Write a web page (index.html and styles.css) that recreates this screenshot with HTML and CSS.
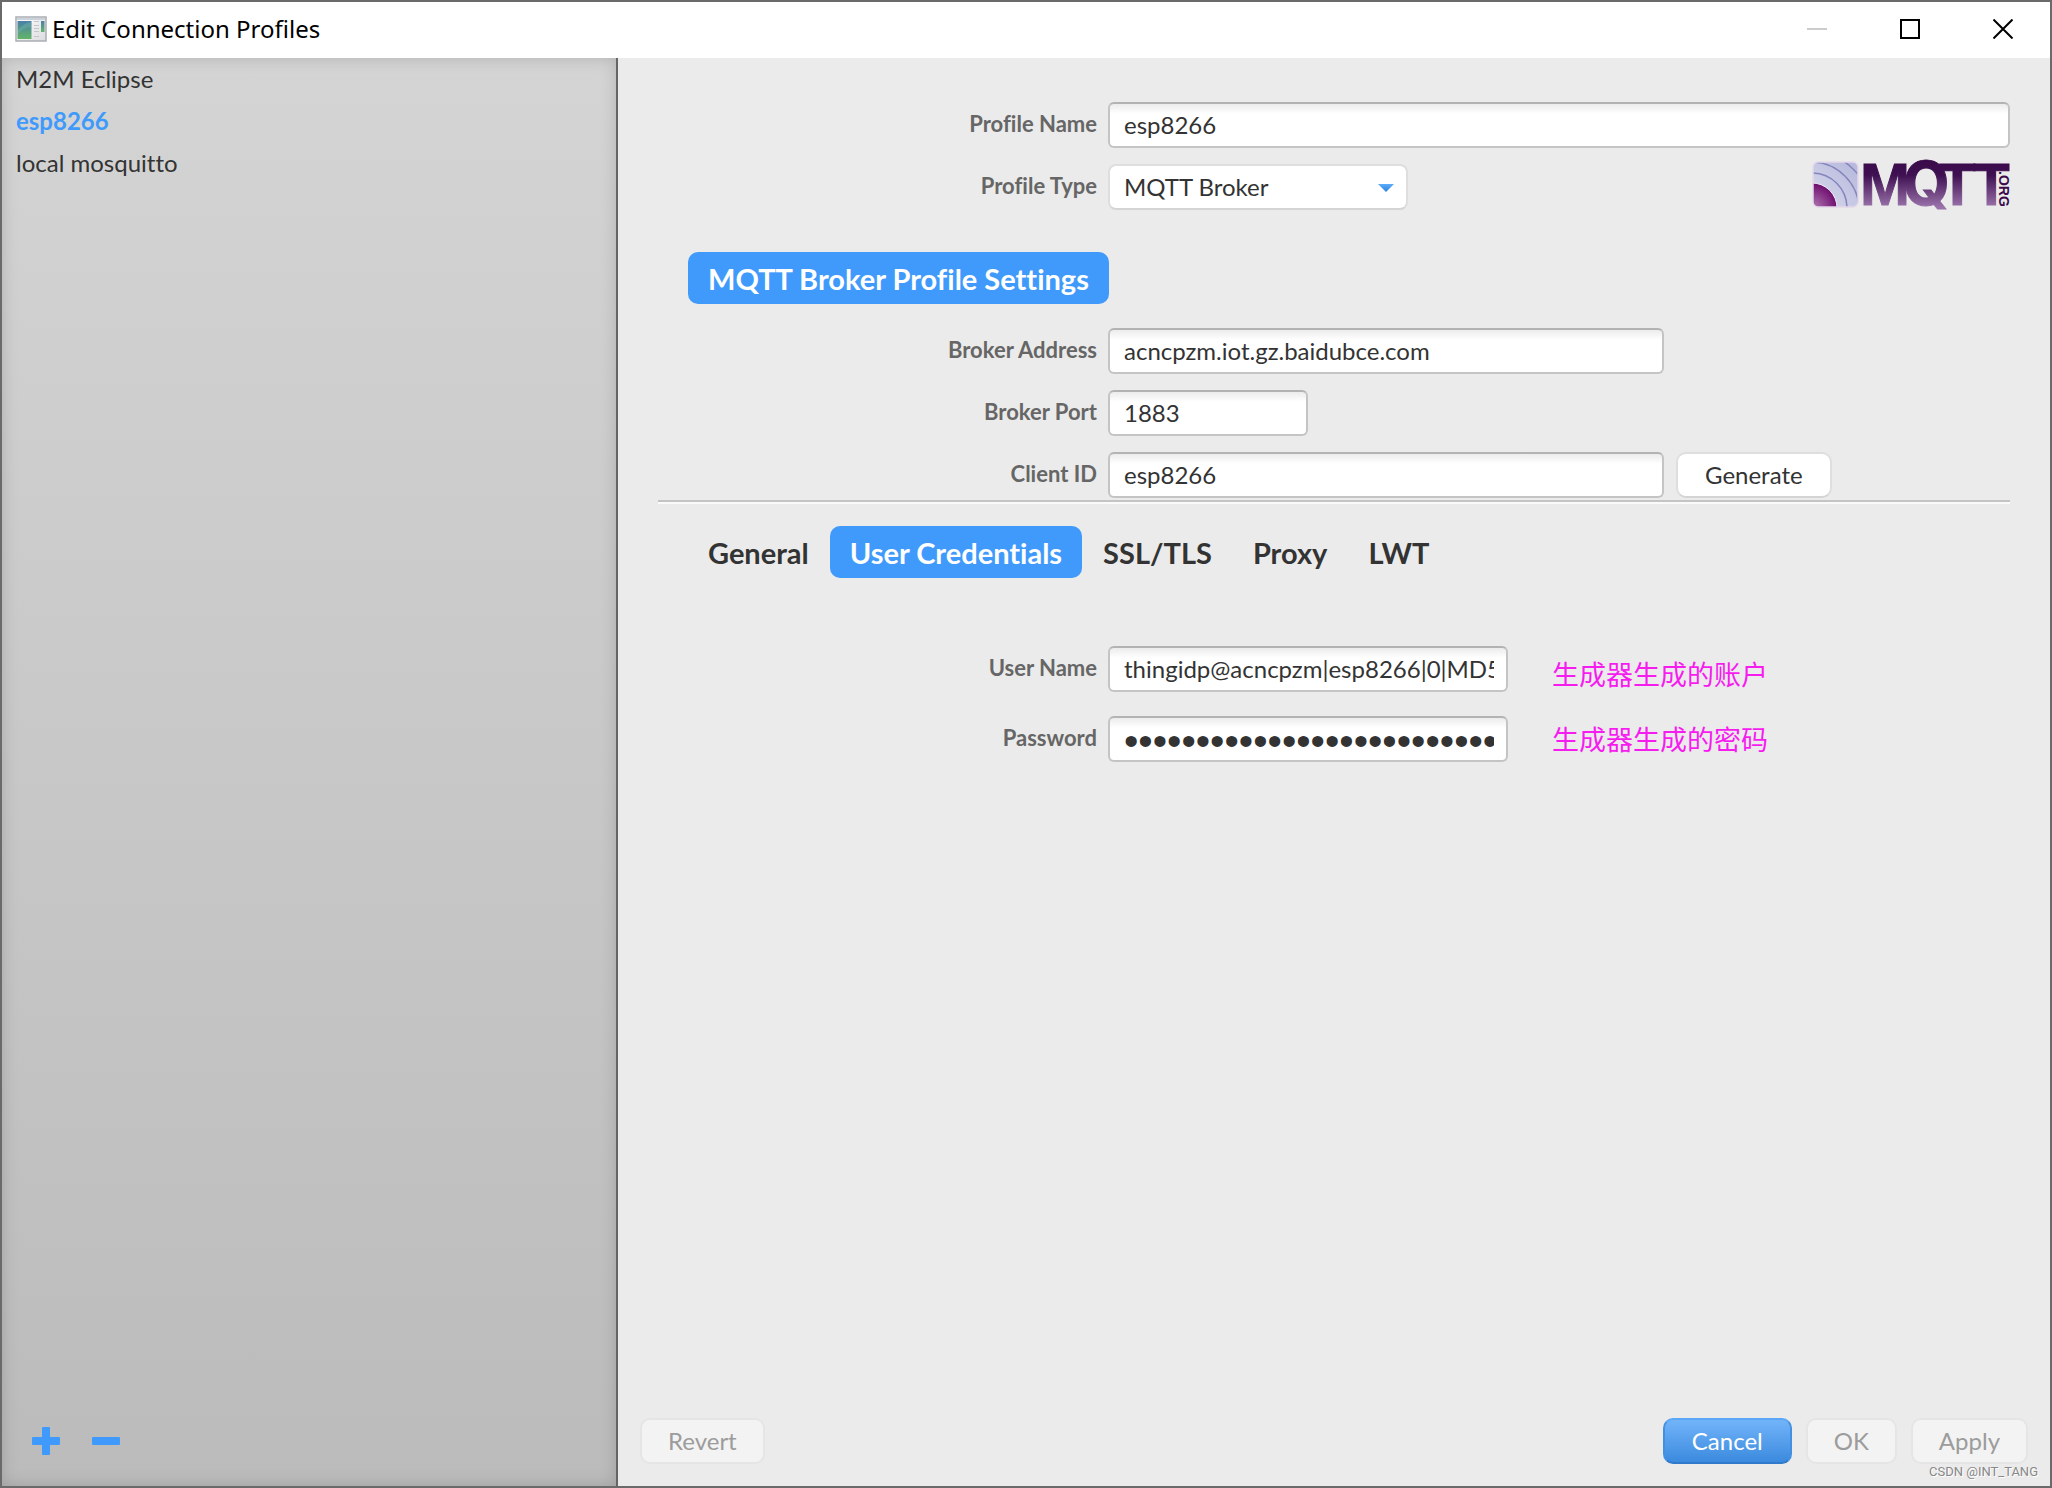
FILE: index.html
```html
<!DOCTYPE html>
<html lang="en">
<head>
<meta charset="utf-8">
<title>Edit Connection Profiles</title>
<link rel="stylesheet" href="styles.css">
</head>
<body>
<div class="window">
  <header class="titlebar">
    <svg class="app-icon" width="32" height="26" viewBox="0 0 32 26" aria-hidden="true">
      <defs>
        <linearGradient id="pane" x1="0" y1="0" x2="0" y2="1"><stop offset="0" stop-color="#4a7fa8"/><stop offset="1" stop-color="#62b568"/></linearGradient>
        <linearGradient id="sheet" x1="0" y1="0" x2="1" y2="1"><stop offset="0" stop-color="#fff"/><stop offset="1" stop-color="#dcdcdf"/></linearGradient>
      </defs>
      <rect x="1" y="1" width="30" height="24" fill="url(#sheet)" stroke="#a9adb3" stroke-width="1.5"/>
      <path d="M2 3h28" stroke="#ccd2da" stroke-width="2"/>
      <rect x="2.500" y="5" width="14" height="18" fill="url(#pane)"/>
      <path d="M3 14q7-8 13-8v5q-7 0-13 7z" fill="#6fb3a8" opacity=".45"/>
      <path d="M19 5.500h5M19 9.500h5M19 12.500h5M19 15.500h5M19 20.500h5" stroke="#c3c6ca"/>
      <rect x="26" y="5" width="3.500" height="11" fill="url(#pane)"/>
    </svg>
    <h1 class="title">Edit Connection Profiles</h1>
    <div class="window-controls">
      <button class="window-button" aria-label="Minimize" disabled><svg width="20" height="20"><path d="M0 10h20" stroke="#ccc" stroke-width="2"/></svg></button>
      <button class="window-button" aria-label="Maximize"><svg width="20" height="20"><rect x="1" y="1" width="18" height="18" fill="none" stroke="#000" stroke-width="2"/></svg></button>
      <button class="window-button" aria-label="Close"><svg width="20" height="20"><path d="M.5.5l19 19M19.500.5l-19 19" stroke="#000" stroke-width="2"/></svg></button>
    </div>
  </header>

  <div class="content">
    <aside class="sidebar">
      <ul class="profiles">
        <li class="profile">M2M Eclipse</li>
        <li class="profile profile-selected">esp8266</li>
        <li class="profile">local mosquitto</li>
      </ul>
      <div class="profile-actions">
        <button class="icon-button" aria-label="Add profile"><svg width="28" height="28"><path d="M11 0h6a1 1 0 0 1 1 1v9h9a1 1 0 0 1 1 1v6a1 1 0 0 1-1 1h-9v9a1 1 0 0 1-1 1h-6a1 1 0 0 1-1-1v-9h-9a1 1 0 0 1-1-1v-6a1 1 0 0 1 1-1h9v-9a1 1 0 0 1 1-1z" fill="#3f9afb"/></svg></button>
        <button class="icon-button" aria-label="Remove profile"><svg width="28" height="28"><rect y="10" width="28" height="8" rx="1" fill="#3f9afb"/></svg></button>
      </div>
    </aside>

    <main class="editor">
      <form class="form">
        <section class="fields">
          <div class="row">
            <label class="label" for="profile-name">Profile Name</label>
            <input class="input input-fill" id="profile-name" type="text" value="esp8266">
          </div>
          <div class="row">
            <label class="label" for="profile-type">Profile Type</label>
            <div class="select-box">
              <select class="select" id="profile-type"><option>MQTT Broker</option></select>
              <svg class="select-arrow" width="16" height="8"><defs><linearGradient id="arrow" x1="0" y1="0" x2="0" y2="1"><stop offset="0" stop-color="#5cacfa"/><stop offset="1" stop-color="#2d80de"/></linearGradient></defs><path d="M0 0h16l-8 8z" fill="url(#arrow)"/></svg>
            </div>
            <svg class="logo" width="198" height="54" viewBox="0 0 198 54" role="img" aria-label="MQTT.ORG">
              <defs>
                <linearGradient id="ink" gradientUnits="userSpaceOnUse" x1="0" y1="2" x2="0" y2="47"><stop offset="0" stop-color="#3b0b4b"/><stop offset=".3" stop-color="#3f1152"/><stop offset="1" stop-color="#9a72aa"/></linearGradient>
                <linearGradient id="tile" x1="0" y1="1" x2="1" y2="0"><stop offset="0" stop-color="#dcdcec"/><stop offset=".5" stop-color="#c6c8e4"/><stop offset="1" stop-color="#b4b5da"/></linearGradient>
                <radialGradient id="core" gradientUnits="userSpaceOnUse" cx="1" cy="48" r="28"><stop offset="0" stop-color="#b27ab4"/><stop offset=".85" stop-color="#701070"/></radialGradient>
                <clipPath id="tile-clip"><rect x="1" y="2" width="45" height="45" rx="5"/></clipPath>
              </defs>
              <g clip-path="url(#tile-clip)">
                <rect width="48" height="48" fill="url(#tile)"/>
                <circle cx="-3" cy="54" r="63" fill="none" stroke="#8385bb" stroke-width="1.500"/>
                <circle cx="-1" cy="50" r="48" fill="none" stroke="#8385bb" stroke-width="1.500"/>
                <circle cx="0" cy="48" r="35" fill="none" stroke="#8385bb" stroke-width="1.500"/>
                <circle cx="0" cy="48" r="25" fill="url(#core)" stroke="#eeeaf6"/>
              </g>
              <rect x="1" y="2" width="45" height="45" rx="5" fill="none" stroke="#e5d9ec" stroke-width="1.500"/>
              <text class="logo-name" y="45" fill="url(#ink)" stroke="url(#ink)"><tspan x="48">M</tspan><tspan class="logo-q" x="91">Q</tspan><tspan x="127">T</tspan><tspan x="161">T</tspan></text>
              <text class="logo-domain" transform="translate(187 11) rotate(90)">.ORG</text>
            </svg>
          </div>
        </section>

        <h2 class="section-title">MQTT Broker Profile Settings</h2>

        <section class="fields">
          <div class="row">
            <label class="label" for="address">Broker Address</label>
            <input class="input input-large" id="address" type="text" value="acncpzm.iot.gz.baidubce.com">
          </div>
          <div class="row">
            <label class="label" for="port">Broker Port</label>
            <input class="input input-small" id="port" type="text" value="1883">
          </div>
          <div class="row">
            <label class="label" for="client">Client ID</label>
            <input class="input input-large" id="client" type="text" value="esp8266">
            <button class="button" type="button">Generate</button>
          </div>
        </section>

        <hr class="divider">

        <div class="tabs" role="tablist">
          <button class="tab" type="button" role="tab">General</button>
          <button class="tab tab-selected" type="button" role="tab" aria-selected="true">User Credentials</button>
          <button class="tab" type="button" role="tab">SSL/TLS</button>
          <button class="tab" type="button" role="tab">Proxy</button>
          <button class="tab" type="button" role="tab">LWT</button>
        </div>

        <section class="fields credentials">
          <div class="row">
            <label class="label" for="user">User Name</label>
            <input class="input input-medium" id="user" type="text" value="thingidp@acncpzm|esp8266|0|MD5">
          </div>
          <div class="row">
            <label class="label" for="password">Password</label>
            <input class="input input-medium input-password" id="password" type="password" value="0123456789abcdef0123456789abcdef">
          </div>
          <div class="notes" lang="zh-CN">
            <p class="note">生成器生成的账户</p>
            <p class="note">生成器生成的密码</p>
          </div>
        </section>
      </form>

      <footer class="footer">
        <button class="button button-revert" disabled>Revert</button>
        <button class="button button-primary">Cancel</button>
        <button class="button" disabled>OK</button>
        <button class="button" disabled>Apply</button>
      </footer>
    </main>
  </div>
  <span class="watermark">CSDN @INT_TANG</span>
</div>
</body>
</html>
```
FILE: styles.css
```css
* { box-sizing: border-box; }

body {
  margin: 0;
  font-family: Lato, "Noto Sans CJK SC", sans-serif;
  font-size: 24px;
  font-variant-ligatures: none;
  color: #333;
}

button, input, select { font: inherit; font-variant-ligatures: none; color: inherit; }

.window {
  position: relative;
  display: flex;
  flex-direction: column;
  min-height: 100vh;
  border: 2px solid #6b6a6b;
  background: #ebebeb;
}

/* Title bar */
.titlebar {
  display: flex;
  align-items: center;
  height: 56px;
  padding: 0 1px 2px 13px;
  background: #fff;
}
.title {
  margin: 0 0 0 5px;
  font: 400 24px/32px "Noto Sans", sans-serif;
  color: #000;
}
.window-controls { display: flex; margin-left: auto; }
.window-button {
  display: grid;
  place-items: center;
  width: 93px;
  height: 54px;
  padding: 0;
  border: 0;
  background: none;
}

/* Profile list */
.content { display: flex; flex: 1; }
.sidebar {
  display: flex;
  flex: none;
  flex-direction: column;
  justify-content: space-between;
  width: 616px;
  border-right: 2px solid #656566;
  background: linear-gradient(#d4d4d4, #bbb);
  box-shadow: inset 0 0 16px rgba(0, 0, 0, .16);
}
.profiles { margin: 0; padding: 0 14px; list-style: none; }
.profile { line-height: 42px; }
.profile-selected { font-weight: 700; color: #3f9afb; }
.profile-actions { display: flex; gap: 32px; padding: 0 30px 31px; }
.icon-button { display: flex; padding: 0; border: 0; background: none; }

/* Form */
.editor { display: flex; flex: 1; flex-direction: column; justify-content: space-between; min-width: 0; }
.form { padding: 44px 40px 0; }
.fields { display: flex; flex-direction: column; gap: 16px; }
.row { display: flex; align-items: center; height: 46px; }
.label {
  flex: none;
  width: 439px;
  margin-right: 11px;
  padding-bottom: 2px;
  font-size: 22px;
  font-weight: 700;
  line-height: 28px;
  text-align: right;
  color: #666;
}
.input {
  height: 46px;
  padding: 0 12px 2px 14px;
  border: 2px solid #c4c4c4;
  border-top-color: #b3b3b3;
  border-radius: 6px;
  outline: 0;
  background: linear-gradient(#ececec, #fff 10px);
}
.input-fill { flex: 1; min-width: 0; }
.input-large { width: 556px; }
.input-medium { width: 400px; }
.input-small { width: 200px; }
.input-password { padding-top: 6px; font: 41px/36px "Liberation Sans", sans-serif; }

.select-box { position: relative; width: 300px; }
.select {
  display: block;
  width: 100%;
  height: 46px;
  padding: 0 40px 2px 14px;
  border: 2px solid #dedede;
  border-bottom-color: #d4d4d4;
  border-radius: 8px;
  appearance: none;
  background: #fff;
}
.select-arrow { position: absolute; top: 20px; right: 14px; pointer-events: none; }

.logo { margin-left: auto; overflow: visible; }
.logo-name { font: 700 60px "Liberation Sans", sans-serif; }
.logo-q { font-family: Inter, sans-serif; }
.logo-domain { font: 700 14px "Liberation Sans", sans-serif; fill: #3b0b4b; }

.section-title, .tab {
  height: 52px;
  padding: 2px 20px 0;
  border: 0;
  border-radius: 10px;
  background: none;
  font-size: 29px;
  font-weight: 700;
  line-height: 50px;
}
.section-title {
  width: fit-content;
  margin: 42px 0 24px 30px;
  background: #3f9afb;
  color: #fff;
}
.divider {
  height: 4px;
  margin: 2px 0 22px;
  border: 0;
  border-top: 2px solid #c4c4c4;
  background: #fafafa;
}
.tabs { display: flex; gap: 1px; padding-left: 30px; }
.tab-selected { background: #3f9afb; color: #fff; }

.credentials { position: relative; gap: 24px; margin-top: 68px; }
.notes { position: absolute; top: 8px; left: 894px; }
.note { margin: 0 0 25px; font: 27px/40px "Noto Sans CJK SC", sans-serif; color: #f61cf0; }

/* Buttons */
.button {
  height: 46px;
  padding: 0 27px 2px;
  border: 2px solid #dedede;
  border-bottom-color: #d4d4d4;
  border-radius: 10px;
  background: #fff;
}
.row .button { margin-left: 12px; }
.button:disabled { padding: 0 26px 2px; border-color: #e5e5e5; background: #f3f3f3; color: #9c9c9c; }
.button-primary {
  border-color: #5aa6f7 #4390e2 #3079cb;
  background: linear-gradient(#72b4fa, #3b8ade);
  color: #fff;
}
.footer { display: flex; gap: 14px; padding: 0 22px 22px; }
.button-revert { margin-right: auto; }

.watermark {
  position: absolute;
  right: 12px;
  bottom: 4px;
  font: 13px/20px Roboto, sans-serif;
  color: #888;
  text-shadow: 1px 1px #fff;
}
```
